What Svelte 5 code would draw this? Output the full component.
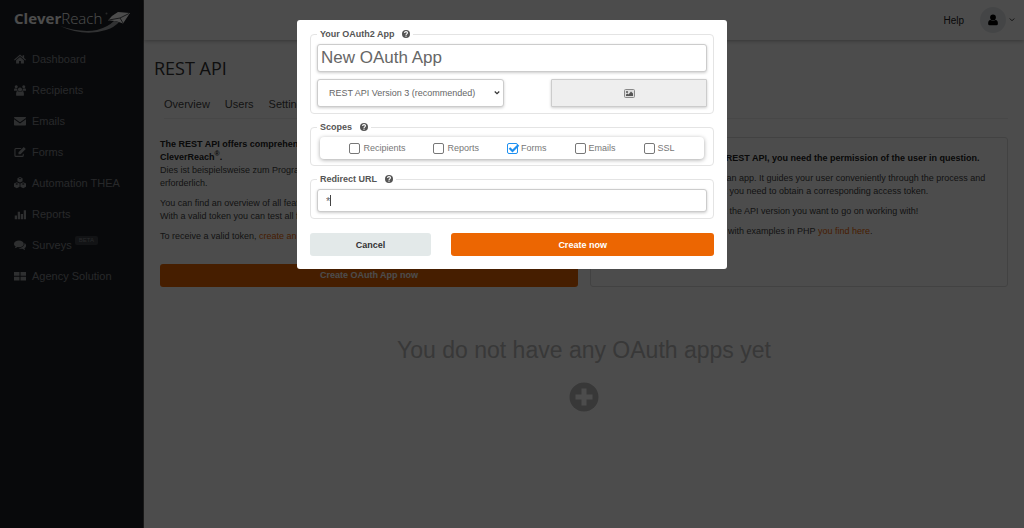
<script>
  const menu = [
    { label: 'Dashboard', icon: 'home' },
    { label: 'Recipients', icon: 'group' },
    { label: 'Emails', icon: 'mail' },
    { label: 'Forms', icon: 'edit' },
    { label: 'Automation THEA', icon: 'cubes' },
    { label: 'Reports', icon: 'chart' },
    { label: 'Surveys', icon: 'comments', badge: 'BETA' },
    { label: 'Agency Solution', icon: 'grid' }
  ];

  const icons = {
    home: 'M8 2 0 9l1 1 7-6 7 6 1-1-2.500-2.200V3h-2v2zM8 5.200 2.800 9.600V14h4v-3.500h2.400V14h4V9.600z',
    group:
      'M8 4.500a2.800 2.800 0 1 0 .01 0zM3 1.500a2 2 0 1 0 .01 0zM13 1.500a2 2 0 1 0 .01 0zM0 9V7.500Q0 5.500 1.500 5.500 3 6.400 4.300 5.900 4.200 8 5.200 9zM16 9V7.500Q16 5.500 14.500 5.500 13 6.400 11.700 5.900 11.800 8 10.800 9zM2.800 15v-2.500Q2.800 9.300 5.300 9.500 8 11.500 10.700 9.500q2.500-.2 2.500 3V15q0 .8-1.200.8H4Q2.800 15.800 2.800 15z',
    mail: 'M0 3.500Q0 2.500 1 2.500h14q1 0 1 1v.6L8 9.800 0 4.100zM0 5.800l8 5.500 8-5.500V13q0 1-1 1H1q-1 0-1-1z',
    edit: 'M10 2.500H2.500Q.5 2.500.5 4.500v8q0 2 2 2H11q2 0 2-2V10l-1.500 1.300v1.200q0 .5-.5.500H2.500Q2 13 2 12.500v-8Q2 4 2.500 4H9zM6 8.300 13 1.300 15.700 4 8.700 11H6z',
    cubes:
      'M8 0 4.600 1.500v4L8 7.200l3.400-1.700v-4zM8 1.200l2 .9-2 1-2-1zM3.700 7 0 8.700v4.400l3.700 1.900 3.800-1.900V8.700zM3.700 8.200l2.200 1-2.200 1.100-2.100-1.100zM12.300 7 8.500 8.700v4.400l3.800 1.900 3.700-1.900V8.700zM12.300 8.200l2.100 1-2.100 1.100-2.200-1.100z',
    chart: 'M1 10h3v5H1zM5 5h3v10H5zM9 8h3v7H9zM13 3h3v12h-3z',
    comments:
      'M6.500 2C3 2 0 4 0 6.500c0 1.500 1 2.700 2.300 3.500L1 12.200q2.200-.3 3.700-1.400C10 11.500 13 9 13 6.500 13 4 10 2 6.500 2zM14 5.200C14.300 9.500 10 12 6.200 12c1.300 1 3.300 1.300 5.100 1.100q1.500 1.100 3.700 1.400L13.800 12.400C17.300 10.300 16.300 6.600 14 5.200z',
    grid: 'M0 2.500h7.300v5H0zM8.700 2.500H16v5H8.700zM0 9h7.300v5H0zM8.700 9H16v5H8.700z'
  };

  const tabs = ['Overview', 'Users', 'Settings'];

  let appName = 'New OAuth App';
  let version = '3';
  let redirectUrl = '*';
  let scopes = [
    { name: 'Recipients', checked: false },
    { name: 'Reports', checked: false },
    { name: 'Forms', checked: true },
    { name: 'Emails', checked: false },
    { name: 'SSL', checked: false }
  ];
</script>

{#snippet help()}
  <svg class="help-icon" viewBox="0 0 16 16" aria-hidden="true">
    <circle cx="8" cy="8" r="8" fill="#555" />
    <path d="M5 6q.4-2.700 3-2.700 3 0 3 2.400 0 1.300-1.500 2.100Q8 8.600 8 10" fill="none" stroke="#fff" stroke-width="2.200" />
    <path d="M6.900 11.200h2.200v2.100H6.900z" fill="#fff" />
  </svg>
{/snippet}

<div class="app">
  <aside>
    <a class="logo" href="#home" aria-label="CleverReach">
      <svg viewBox="0 0 120 28" width="120" height="28">
        <text x="0" y="16" fill="#fff"><tspan font-weight="700">Clever</tspan><tspan font-weight="300">Reach</tspan></text>
        <circle cx="92.500" cy="5.500" r="1" fill="#888" />
        <path d="M46 18Q70 29 92 22 101 19 105 14L100 13Q94 19 83 22 67 25 46 18z" fill="#a5a7aa" />
        <path d="M94 12.500Q98 7 104 4L116 5 109 15.500Q102 12 94 12.500z" fill="#fff" />
        <path d="M95 12 106 10 115 5.500M106 10l3 5" fill="none" stroke="#54565a" stroke-width="1" />
      </svg>
    </a>
    <nav>
      {#each menu as item}
        <a href="#{item.icon}">
          <svg viewBox="0 0 16 16" aria-hidden="true"><path d={icons[item.icon]} fill-rule="evenodd" /></svg>
          <span>{item.label}</span>
          {#if item.badge}<sup>{item.badge}</sup>{/if}
        </a>
      {/each}
    </nav>
  </aside>

  <div class="content">
    <header>
      <a href="#help">Help</a>
      <button class="account" aria-label="Account">
        <span class="avatar">
          <svg viewBox="0 0 16 16" width="12" height="12">
            <circle cx="8" cy="4.500" r="3.800" />
            <path d="M1.500 13Q1.500 8 4.500 8q3.500 2 7 0 3 0 3 5 0 2-2 2h-9q-2 0-2-2z" />
          </svg>
        </span>
        <svg viewBox="0 0 8 8" width="6" height="6"><path d="M1 2l3 3 3-3" fill="none" stroke="#333" stroke-width="1.300" /></svg>
      </button>
    </header>

    <main>
      <h1>REST API</h1>
      <nav class="tabs">
        {#each tabs as tab}
          <a href="#{tab}">{tab}</a>
        {/each}
      </nav>

      <div class="columns">
        <section class="intro">
          <p>
            <strong>The REST API offers comprehensive access to<br />CleverReach<sup>®</sup>.</strong><br />
            Dies ist beispielsweise zum Programmieren von Plugins<br />
            erforderlich.
          </p>
          <p>
            You can find an overview of all features here.<br />
            With a valid token you can test all functions.
          </p>
          <p>To receive a valid token, <a href="#create">create an app</a>.</p>
          <button class="primary">Create OAuth App now</button>
        </section>

        <section class="info">
          <p><strong>To access accounts with the REST API, you need the permission of the user in question.</strong></p>
          <p>
            That is why you have to create an app. It guides your user conveniently through the process and<br />
            provides all the information that you need to obtain a corresponding access token.
          </p>
          <p>Please make sure that you pick the API version you want to go on working with!</p>
          <p>A further OAuth documentation with examples in PHP <a href="#docs">you find here</a>.</p>
        </section>
      </div>

      <div class="empty">
        <h2>You do not have any OAuth apps yet</h2>
        <button aria-label="Add OAuth app">
          <svg viewBox="0 0 30 30" width="30" height="30">
            <circle cx="15" cy="15" r="14.500" fill="#bbb" />
            <path d="M15 6.500v17M6.500 15h17" stroke="#fff" stroke-width="5" />
          </svg>
        </button>
      </div>
    </main>
  </div>
</div>

<div class="overlay">
  <form class="modal" on:submit|preventDefault>
    <fieldset>
      <legend>Your OAuth2 App {@render help()}</legend>
      <input class="field name" aria-label="Your OAuth2 App" bind:value={appName} />
      <div class="row">
        <div class="select">
          <select class="field" aria-label="API version" bind:value={version}>
            <option value="3">REST API Version 3 (recommended)</option>
            <option value="2">REST API Version 2</option>
          </select>
          <svg viewBox="0 0 8 8" width="6" height="6"><path d="M1 2l3 3 3-3" fill="none" stroke="#333" stroke-width="1.600" /></svg>
        </div>
        <button type="button" class="field image" aria-label="Choose image">
          <svg viewBox="0 0 22 18" width="11" height="9">
            <rect x="1" y="1" width="20" height="16" rx="2" fill="#ddd" stroke="#888" stroke-width="2" />
            <circle cx="6" cy="6" r="2" fill="#555" />
            <path d="M4 14v-3l3-2 2 2 5-6 4 4v5z" fill="#555" />
          </svg>
        </button>
      </div>
    </fieldset>

    <fieldset>
      <legend>Scopes {@render help()}</legend>
      <div class="scopes">
        {#each scopes as scope}
          <label>
            <span class="box">
              <input type="checkbox" bind:checked={scope.checked} />
              {#if scope.checked}
                <svg viewBox="0 0 12 11" width="12" height="11"><path d="M2.500 5 5.500 8 11.500 2" fill="none" stroke="#1e90f0" stroke-width="2.200" /></svg>
              {/if}
            </span>
            {scope.name}
          </label>
        {/each}
      </div>
    </fieldset>

    <fieldset>
      <legend>Redirect URL {@render help()}</legend>
      <div class="url">
        <input class="field" aria-label="Redirect URL" bind:value={redirectUrl} />
        <span class="caret"></span>
      </div>
    </fieldset>

    <div class="actions">
      <button type="button" class="cancel">Cancel</button>
      <button class="primary">Create now</button>
    </div>
  </form>
</div>

<style>
  :global(body) {
    margin: 0;
    font-family: "Liberation Sans", Arial, sans-serif;
    font-size: 9px;
    color: #444;
    background: #fff;
  }

  * {
    box-sizing: border-box;
  }

  button, input, select {
    font: inherit;
    color: inherit;
  }

  button {
    cursor: pointer;
    border: none;
    padding: 0;
    background: none;
  }

  a {
    color: inherit;
    text-decoration: none;
  }

  svg {
    display: block;
    overflow: visible;
  }

  .app {
    display: flex;
    min-height: 100vh;
  }

  aside {
    flex: 0 0 144px;
    background: #1c1f25;
    color: #84888e;
    border-right: 1px solid #555;
  }

  .logo {
    display: block;
    padding: 8px 0 0 14px;
  }

  .logo text {
    font-family: "Open Sans", "Noto Sans", sans-serif;
    font-size: 15px;
  }

  aside nav {
    display: flex;
    flex-direction: column;
    padding: 7px 0 0 14px;
  }

  aside nav a {
    display: flex;
    align-items: center;
    height: 31px;
    font-size: 11px;
    white-space: nowrap;
  }

  aside nav svg {
    width: 12px;
    height: 12px;
    margin-right: 6px;
    fill: #9a9da2;
  }

  aside nav sup {
    margin: 0 0 8px 3px;
    padding: 0 4px;
    border-radius: 2px;
    background: #3c4046;
    font-size: 6px;
    line-height: 9px;
  }

  .content {
    flex: 1;
    min-width: 0;
  }

  header {
    height: 40px;
    padding: 0 9px 0 0;
    display: flex;
    justify-content: flex-end;
    align-items: center;
    gap: 16px;
    font-size: 10px;
    color: #222;
    box-shadow: 0 1px 4px rgba(0, 0, 0, 0.3);
  }

  .account {
    display: flex;
    align-items: center;
    gap: 3px;
  }

  .avatar {
    display: flex;
    align-items: center;
    justify-content: center;
    width: 26px;
    height: 26px;
    border-radius: 50%;
    background: #e4e8ec;
  }

  main {
    padding: 16px;
  }

  h1 {
    margin: 0 0 0 -6px;
    font: 400 18px/24px "Open Sans", "Noto Sans", sans-serif;
    color: #333;
  }

  .tabs {
    display: flex;
    gap: 15px;
    margin: 17px 0 18px 4px;
    padding-bottom: 7px;
    border-bottom: 1px solid #eee;
    font-size: 11px;
    line-height: 14px;
  }

  .columns {
    display: grid;
    grid-template-columns: 1fr 1fr;
    gap: 12px;
    min-height: 150px;
    line-height: 13px;
  }

  .columns p {
    margin: 0 0 7px;
  }

  .columns strong {
    color: #222;
  }

  .columns a {
    color: #ec6602;
  }

  .columns sup {
    font-size: 7px;
    line-height: 0;
  }

  .intro {
    display: flex;
    flex-direction: column;
    padding-top: 1px;
  }

  .intro .primary {
    margin-top: auto;
  }

  .info {
    padding: 14px 11px;
    border: 1px solid #ddd;
    border-radius: 3px;
  }

  .primary {
    height: 23px;
    border-radius: 3px;
    background: #ec6602;
    color: #fff;
    font-weight: bold;
  }

  .empty {
    display: flex;
    flex-direction: column;
    align-items: center;
    gap: 18px;
    padding-top: 49px;
  }

  .empty h2 {
    margin: 0;
    font-size: 23px;
    font-weight: 400;
    line-height: 28px;
    color: #bbb;
  }

  .overlay {
    position: fixed;
    inset: 0;
    padding-top: 20px;
    background: rgba(0, 0, 0, 0.7);
  }

  .modal {
    width: 42%;
    min-width: 430px;
    margin: 0 auto;
    padding: 8px 13px 13px;
    border-radius: 3px;
    background: #fff;
    color: #666;
  }

  fieldset {
    min-width: 0;
    margin: 0 0 7px;
    padding: 4px 6px 6px;
    border: 1px solid #e4e4e4;
    border-radius: 4px;
  }

  legend {
    display: flex;
    align-items: center;
    gap: 8px;
    padding: 0 3px;
    font-weight: bold;
    line-height: 12px;
    color: #555;
  }

  .help-icon {
    width: 8px;
    height: 8px;
  }

  .field {
    display: block;
    width: 100%;
    height: 28px;
    margin: 0;
    padding: 0 11px;
    border: 1px solid #ccc;
    border-radius: 3px;
    background: #fff;
    box-shadow: 0 1px 3px rgba(0, 0, 0, 0.2);
    outline: none;
  }

  .name {
    padding: 0 3px;
    font-size: 17px;
  }

  .row {
    display: flex;
    justify-content: space-between;
    margin-top: 7px;
  }

  .select {
    position: relative;
    width: 48%;
  }

  .select select {
    appearance: none;
  }

  .select svg {
    position: absolute;
    right: 4px;
    top: 11px;
    pointer-events: none;
  }

  .image {
    display: flex;
    align-items: center;
    justify-content: center;
    width: 40%;
    border-radius: 1px;
    background: #eee;
  }

  .scopes {
    display: flex;
    justify-content: center;
    gap: 28px;
    height: 22px;
    margin: 0 3px;
    border-radius: 4px;
    box-shadow: 0 1px 4px rgba(0, 0, 0, 0.35);
  }

  .scopes label {
    display: flex;
    align-items: center;
    gap: 3px;
    color: #777;
  }

  .box {
    position: relative;
  }

  .box input {
    display: block;
    appearance: none;
    width: 11px;
    height: 11px;
    margin: 0;
    border: 1px solid #777;
    border-radius: 2px;
  }

  .box input:checked {
    border-color: #1e90f0;
  }

  .box svg {
    position: absolute;
    left: 0;
    top: 0;
    pointer-events: none;
  }

  .url {
    position: relative;
  }

  .url .field {
    height: 23px;
    padding: 0 8px;
    font-size: 11px;
  }

  .caret {
    position: absolute;
    left: 13px;
    top: 6px;
    width: 1px;
    height: 11px;
    background: #444;
  }

  .actions {
    display: grid;
    grid-template-columns: 6fr 13fr;
    gap: 20px;
    margin-top: 14px;
  }

  .cancel {
    border-radius: 3px;
    background: #e3e9e9;
    color: #333;
    font-weight: bold;
  }
</style>
